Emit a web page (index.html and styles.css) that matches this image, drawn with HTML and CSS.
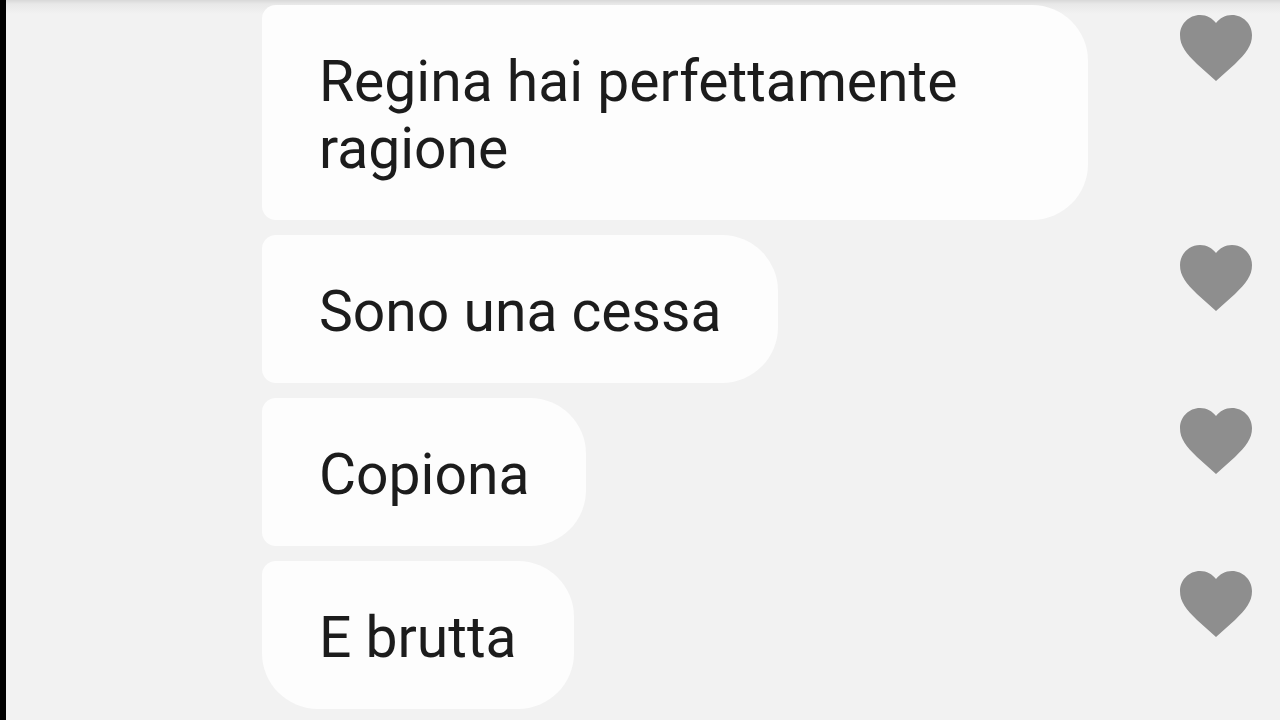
FILE: index.html
```html
<!DOCTYPE html>
<html lang="it">
<head>
  <meta charset="UTF-8" />
  <meta name="viewport" content="width=device-width, initial-scale=1" />
  <title>Chat</title>
  <link rel="stylesheet" href="styles.css">
</head>
<body>
  <!-- Heart icon shared by every like button -->
  <svg class="icon-defs" aria-hidden="true">
    <symbol id="heart" viewBox="0 0 72 66">
      <path d="M36 66L17 49C6 38 0 31 0 20C0 9 9 0 20 0C27 0 32 3 36 8C40 3 45 0 52 0C63 0 72 9 72 20C72 31 66 38 55 49Z" />
    </symbol>
  </svg>

  <main class="chat">
    <div class="message">
      <p class="bubble">Regina hai perfettamente ragione</p>
      <button class="like-btn" type="button" aria-label="Mi piace"><svg><use href="#heart" /></svg></button>
    </div>
    <div class="message">
      <p class="bubble">Sono una cessa</p>
      <button class="like-btn" type="button" aria-label="Mi piace"><svg><use href="#heart" /></svg></button>
    </div>
    <div class="message">
      <p class="bubble">Copiona</p>
      <button class="like-btn" type="button" aria-label="Mi piace"><svg><use href="#heart" /></svg></button>
    </div>
    <div class="message">
      <p class="bubble last">E brutta</p>
      <button class="like-btn" type="button" aria-label="Mi piace"><svg><use href="#heart" /></svg></button>
    </div>
  </main>
</body>
</html>
```
FILE: styles.css
```css
* {
  box-sizing: border-box;
}
body {
  margin: 0;
  font-family: Roboto, sans-serif;
  background-color: #f2f2f2;
  color: #1c1c1c;
}
.icon-defs {
  display: none;
}
.chat {
  display: flex;
  flex-direction: column;
  gap: 15px;
  min-height: 100vh;
  padding: 5px 28px 11px 256px;
  border-left: 6px solid #000;
  background: linear-gradient(#d8d8d8, #e8e8e8 4px, #f2f2f2 14px);
}
.message {
  display: flex;
  justify-content: space-between;
  align-items: flex-start;
}
.bubble {
  max-width: 826px;
  margin: 0;
  padding: 43px 57px 38px;
  border-radius: 14px 56px 56px 14px;
  background-color: #fdfdfd;
  font-size: 57px;
  line-height: 67px;
}
.bubble.last {
  border-bottom-left-radius: 56px;
}
.like-btn {
  margin-top: 10px;
  padding: 0;
  border: none;
  background: none;
  color: #8e8e8e;
  cursor: pointer;
}
.like-btn svg {
  display: block;
  width: 72px;
  height: 66px;
  fill: currentColor;
}
```
